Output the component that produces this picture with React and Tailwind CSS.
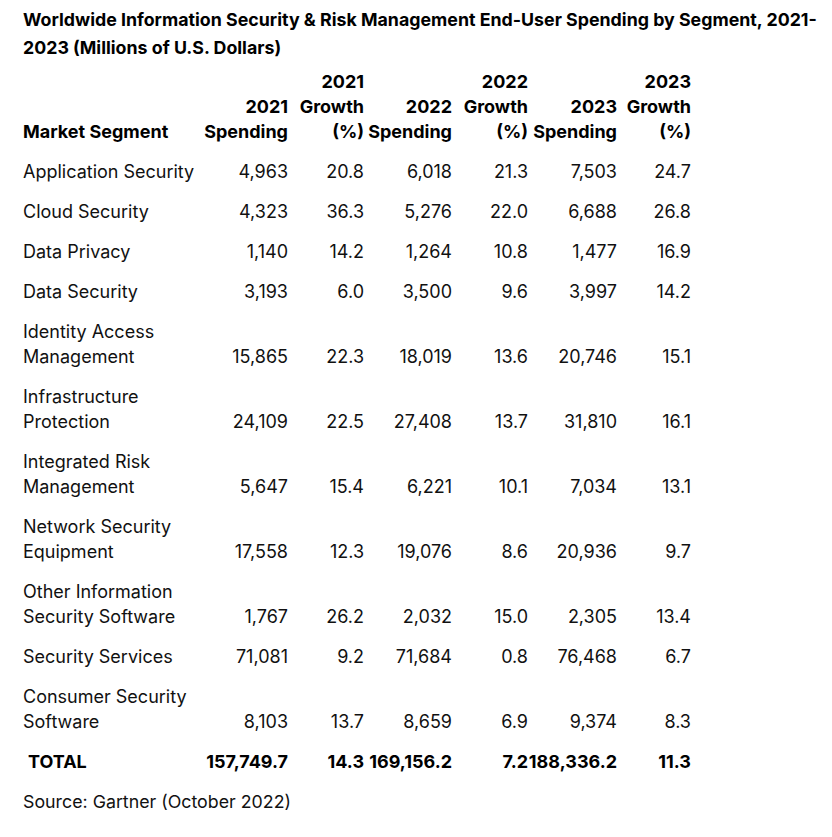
import React from "react";

const rows = [
  [["Application Security"], "4,963", "20.8", "6,018", "21.3", "7,503", "24.7"],
  [["Cloud Security"], "4,323", "36.3", "5,276", "22.0", "6,688", "26.8"],
  [["Data Privacy"], "1,140", "14.2", "1,264", "10.8", "1,477", "16.9"],
  [["Data Security"], "3,193", "6.0", "3,500", "9.6", "3,997", "14.2"],
  [["Identity Access", "Management"], "15,865", "22.3", "18,019", "13.6", "20,746", "15.1"],
  [["Infrastructure", "Protection"], "24,109", "22.5", "27,408", "13.7", "31,810", "16.1"],
  [["Integrated Risk", "Management"], "5,647", "15.4", "6,221", "10.1", "7,034", "13.1"],
  [["Network Security", "Equipment"], "17,558", "12.3", "19,076", "8.6", "20,936", "9.7"],
  [["Other Information", "Security Software"], "1,767", "26.2", "2,032", "15.0", "2,305", "13.4"],
  [["Security Services"], "71,081", "9.2", "71,684", "0.8", "76,468", "6.7"],
  [["Consumer Security", "Software"], "8,103", "13.7", "8,659", "6.9", "9,374", "8.3"],
];

const headers = [
  ["2021", "Spending"],
  ["2021", "Growth", "(%)"],
  ["2022", "Spending"],
  ["2022", "Growth", "(%)"],
  ["2023", "Spending"],
  ["2023", "Growth", "(%)"],
];

function Lines({ lines }) {
  return lines.map((l, i) => (
    <div key={i} className="whitespace-nowrap">
      {l}
    </div>
  ));
}

export default function App() {
  return (
    <div className="min-h-[837px] w-[832px] bg-white pl-[23px] font-['Inter',sans-serif] text-black">
      <h1 className="h-[61px] pt-[6px] text-[17.8px] font-bold leading-[28px]">
        <div className="whitespace-nowrap">
          Worldwide Information Security &amp; Risk Management End-User Spending by Segment, 2021-
        </div>
        <div className="whitespace-nowrap">2023 (Millions of U.S. Dollars)</div>
      </h1>
      <table className="w-[668px] table-fixed border-collapse text-[18px] leading-[25px]">
        <colgroup>
          <col className="w-[177px]" />
          <col className="w-[88px]" />
          <col className="w-[76px]" />
          <col className="w-[88px]" />
          <col className="w-[76px]" />
          <col className="w-[89px]" />
          <col className="w-[74px]" />
        </colgroup>
        <thead>
          <tr className="font-bold">
            <th className="p-0 py-[7.5px] text-left align-bottom font-bold whitespace-nowrap">
              Market Segment
            </th>
            {headers.map((h, i) => (
              <th key={i} className="p-0 py-[7.5px] text-right align-bottom font-bold">
                <Lines lines={h} />
              </th>
            ))}
          </tr>
        </thead>
        <tbody>
          {rows.map((r, i) => (
            <tr key={i}>
              <td className="p-0 py-[7.5px] text-left align-bottom text-[#111]">
                <Lines lines={r[0]} />
              </td>
              {r.slice(1).map((v, j) => (
                <td
                  key={j}
                  className="p-0 py-[7.5px] text-right align-bottom whitespace-nowrap text-[#111]"
                >
                  {v}
                </td>
              ))}
            </tr>
          ))}
          <tr className="font-bold">
            <td className="p-0 py-[7.5px] pl-[5px] text-left align-bottom">TOTAL</td>
            <td className="p-0 py-[7.5px] text-right align-bottom whitespace-nowrap">157,749.7</td>
            <td className="p-0 py-[7.5px] text-right align-bottom whitespace-nowrap">14.3</td>
            <td className="p-0 py-[7.5px] text-right align-bottom whitespace-nowrap">169,156.2</td>
            <td className="p-0 py-[7.5px] text-right align-bottom whitespace-nowrap">7.2</td>
            <td className="p-0 py-[7.5px] text-right align-bottom whitespace-nowrap">188,336.2</td>
            <td className="p-0 py-[7.5px] text-right align-bottom whitespace-nowrap">11.3</td>
          </tr>
        </tbody>
      </table>
      <p className="mt-[7.5px] text-[17.8px] leading-[25px] text-[#111]">Source: Gartner (October 2022)</p>
    </div>
  );
}
